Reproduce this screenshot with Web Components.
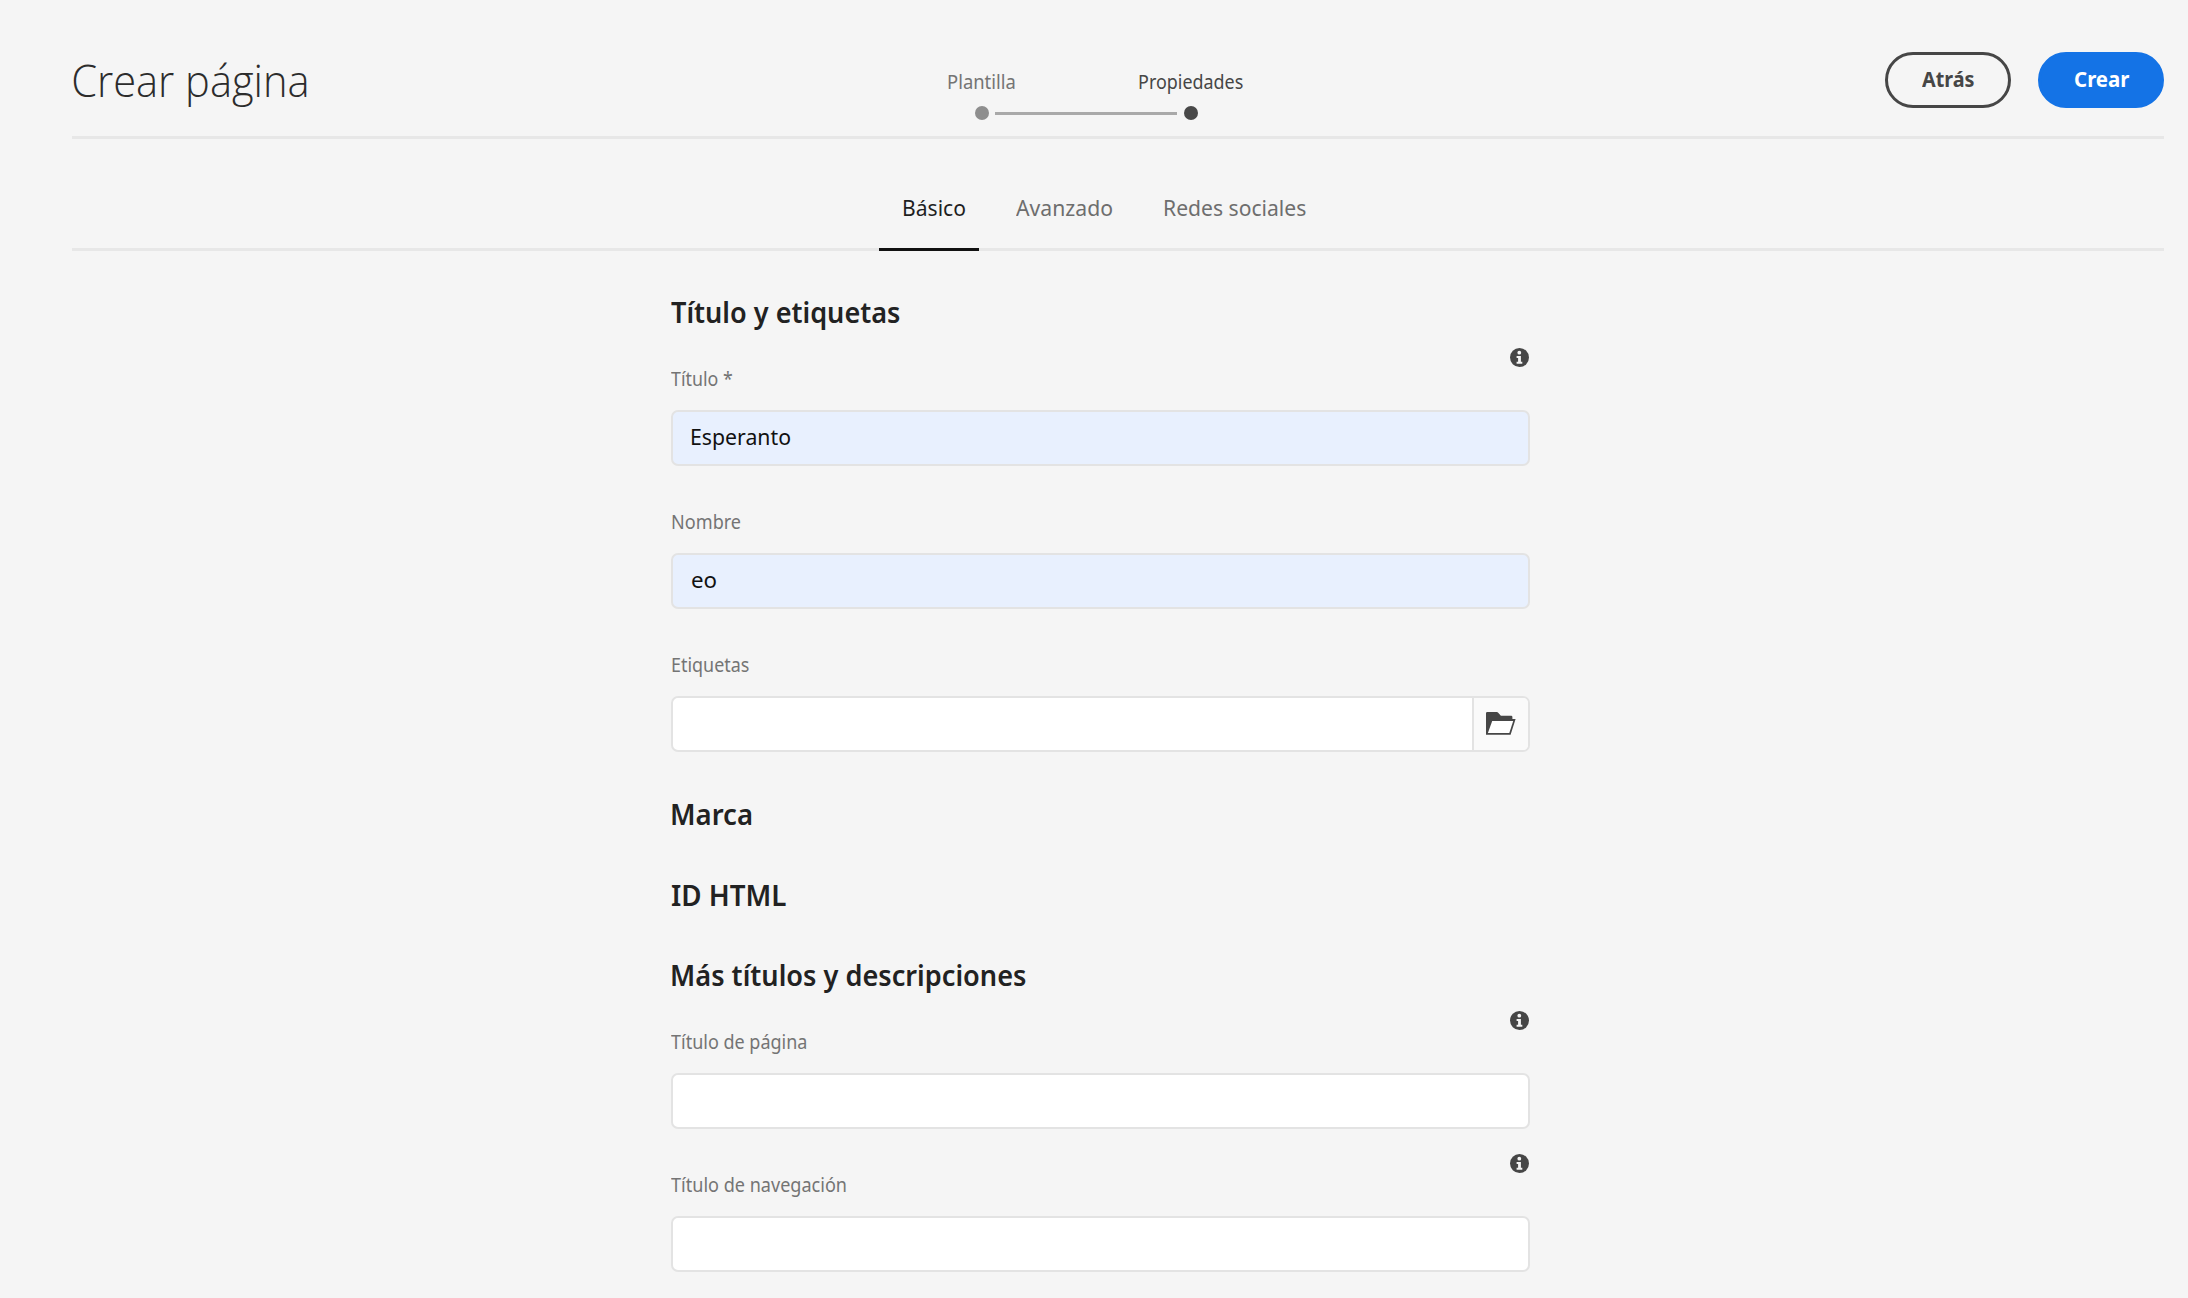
<!DOCTYPE html>
<html lang="es">
<head>
<meta charset="utf-8">
<title>Crear página</title>
<style>
html,body{margin:0;height:100%;overflow:hidden;background:#f5f5f5}
body{font-family:"Noto Sans","Open Sans",sans-serif;color:#2c2c2c}
</style>
</head>
<body>
<create-page></create-page>
<script>
const FAMILY = '"Noto Sans","Open Sans",sans-serif';
const pen = document.createElement('canvas').getContext('2d');
function define(name, html, setup) {
  customElements.define(name, class extends HTMLElement {
    connectedCallback() {
      if (this.shadowRoot) return;
      this.attachShadow({mode: 'open'}).innerHTML = html;
      if (setup) setup.call(this, this.shadowRoot);
    }
  });
}

/* One line of text whose glyphs span exactly `w` pixels. */
define('fit-text', `<style>
:host{display:block;white-space:nowrap;flex:none}
span{display:inline-block;transform-origin:0 50%}
</style><span></span>`, function (root) {
  const span = root.querySelector('span');
  const w = +this.getAttribute('w'), size = this.getAttribute('size');
  const weight = this.getAttribute('weight') || 400;
  const family = this.getAttribute('family') || FAMILY;
  const text = this.getAttribute('text');
  span.textContent = text;
  this.style.width = w + 'px';
  span.style.font = `${weight} ${size}px/${this.getAttribute('line') || 24}px ${family}`;
  pen.font = `${weight} ${size}px ${family}`;
  const m = pen.measureText(text);
  const k = w / (m.actualBoundingBoxLeft + m.actualBoundingBoxRight);
  span.style.transform = `translateX(${m.actualBoundingBoxLeft * k}px) scaleX(${k})`;
});

define('info-icon', `<style>:host{display:block;width:19px;height:19px}svg{display:block}</style>
<svg width="19" height="19" viewBox="0 0 19 19"><circle cx="9.5" cy="9.5" r="9.5" fill="#464646"/>
<circle cx="9.3" cy="4.7" r="1.9" fill="#f5f5f5"/>
<path d="M6.6 8h4.3v5.8h1.4v1.9H6.6v-1.9h1.5V9.9H6.6z" fill="#f5f5f5"/></svg>`);

define('folder-icon', `<style>:host{display:block;margin-top:-1px}svg{display:block}</style>
<svg width="30" height="23" viewBox="0 0 30 23">
<path d="M0 22.8V1.2Q0 0 1.2 0H10.8Q11.6 0 12.2.7L14.9 3.8H25.2Q26.4 3.8 26.4 5V7.1H29.6L24.6 22.8Z" fill="#464646"/>
<path d="M6.2 8.9H27.2L23.3 21H1.9Z" fill="#fff"/></svg>`);

define('pill-button', `<style>
:host{display:flex;box-sizing:border-box;width:126px;height:56px;border-radius:28px;border:3px solid #464646;color:#464646;align-items:center;justify-content:center;padding-bottom:1px}
:host([primary]){background:#1473e6;border-color:#1473e6;color:#fff;padding-left:2px}
</style><slot></slot>`);

define('wizard-steps', `<style>
:host{display:block;padding-top:70px}
.labels{display:flex}
.labels div{flex:1;display:flex;justify-content:center;color:#747474}
.labels div+div{color:#464646}
.track{display:flex;align-items:center;justify-content:center;gap:6.5px;margin-top:12px}
i{width:14px;height:14px;border-radius:50%;background:#8e8e8e}
b{width:182px;height:3px;background:#a9a9a9}
i:last-child{background:#484848}
</style>
<div class="labels"><div><fit-text text="Plantilla" w="67" size="19.3"></fit-text></div><div><fit-text text="Propiedades" w="104" size="19.3"></fit-text></div></div>
<div class="track"><i></i><b></b><i></i></div>`);

define('page-header', `<style>
:host{display:grid;grid-template-columns:805px 418px 1fr;height:139px;box-sizing:border-box;border-bottom:3px solid #e7e7e7;margin:0 24px 0 72px}
.title{padding:50px 0 0 1px}
.actions{display:flex;justify-content:flex-end;gap:27.5px;padding-top:52px}
</style>
<div class="title"><fit-text text="Crear página" w="234" size="45" line="60" weight="300" family='"Open Sans"'></fit-text></div>
<wizard-steps></wizard-steps>
<div class="actions">
<pill-button><fit-text text="Atrás" w="52" size="21" weight="700"></fit-text></pill-button>
<pill-button primary><fit-text text="Crear" w="55" size="21" weight="700"></fit-text></pill-button></div>`);

define('tab-bar', `<style>
:host{display:flex;box-sizing:border-box;height:112px;margin:0 24px 0 72px;padding:57px 0 0 807px;border-bottom:3px solid #e7e7e7;color:#6e6e6e}
.tab{box-sizing:border-box;height:55px}
.on{width:100px;padding-left:25px;color:#1f1f1f;border-bottom:3px solid #111}
.two{padding-left:37px}.three{padding-left:53px}
</style>
<div class="tab on"><fit-text text="Básico" w="61" size="21.5"></fit-text></div>
<div class="tab two"><fit-text text="Avanzado" w="96" size="21.5"></fit-text></div>
<div class="tab three"><fit-text text="Redes sociales" w="141" size="21.5"></fit-text></div>`);

define('form-heading', `<style>:host{display:block;padding-left:var(--inset,1px);color:#222}</style><slot></slot>`);

define('form-field', `<style>
:host{display:block}
.label{display:flex;justify-content:space-between;box-sizing:border-box;height:24px;padding-top:1px;color:#747474}
info-icon{margin-top:-19px;margin-right:1px}
.box{display:flex;box-sizing:border-box;height:56px;margin-top:20px;border:2px solid #e3e3e3;border-radius:7px;background:#fff;color:#111;overflow:hidden;padding-left:19px;align-items:center;justify-content:space-between}
.box slot{display:block;margin-top:-2px}
:host([filled]) .box{background:#e8f0fe}
.pick{display:flex;box-sizing:border-box;width:56px;height:52px;align-items:center;justify-content:center;padding-left:1px;border-left:2px solid #e3e3e3;background:#fafafa}
</style>
<div class="label"><slot name="label"></slot></div><div class="box"><slot></slot></div>`, function (root) {
  if (this.hasAttribute('info')) root.querySelector('.label').append(document.createElement('info-icon'));
  if (this.hasAttribute('browse')) {
    const pick = document.createElement('div');
    pick.className = 'pick';
    pick.append(document.createElement('folder-icon'));
    root.querySelector('.box').append(pick);
  }
});

define('properties-form', `<style>
:host{display:flex;flex-direction:column;width:859px;margin-left:670.5px;padding-top:43px}
.first{margin-top:36px}.field{margin-top:43px}
.mid{margin-top:44px}.marca{margin-top:44px}
.in{padding-left:1px}
</style>
<form-heading style="--inset:0px"><fit-text text="Título y etiquetas" w="228.5" size="28.3" weight="600" line="36"></fit-text></form-heading>
<form-field class="first" info filled><fit-text slot="label" text="Título *" w="61" size="19.6"></fit-text><fit-text text="Esperanto" w="98" size="21.5"></fit-text></form-field>
<form-field class="field" filled><fit-text class="in" slot="label" text="Nombre" w="69" size="19.6"></fit-text><fit-text text="eo" w="24" size="21.5"></fit-text></form-field>
<form-field class="field" browse><fit-text class="in" slot="label" text="Etiquetas" w="77" size="19.6"></fit-text></form-field>
<form-heading class="marca"><fit-text text="Marca" w="79.5" size="28.3" weight="600" line="36"></fit-text></form-heading>
<form-heading style="margin-top:45px;--inset:0px"><fit-text text="ID HTML" w="115" size="28.3" weight="600" line="36"></fit-text></form-heading>
<form-heading class="mid"><fit-text text="Más títulos y descripciones" w="353.5" size="28.3" weight="600" line="36"></fit-text></form-heading>
<form-field class="first" info><fit-text slot="label" text="Título de página" w="135.5" size="19.6"></fit-text></form-field>
<form-field class="field" info><fit-text slot="label" text="Título de navegación" w="175" size="19.6"></fit-text></form-field>`);

define('create-page', `<style>:host{display:block;height:1298px;overflow:hidden}</style>
<page-header></page-header><tab-bar></tab-bar><properties-form></properties-form>`);
</script>
</body>
</html>
